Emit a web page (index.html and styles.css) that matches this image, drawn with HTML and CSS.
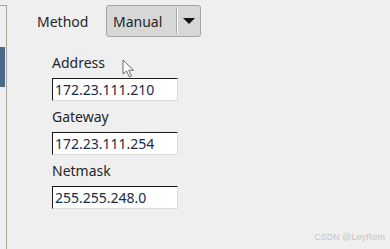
FILE: index.html
```html
<!DOCTYPE html>
<html lang="en">
<head>
  <meta charset="UTF-8" />
  <title>Network settings</title>
  <link rel="stylesheet" href="styles.css">
</head>
<body>
  <div class="side-strip">
    <div class="side-tab"></div>
  </div>

  <div class="panel">
    <div class="method-row">
      <span class="method-label">Method</span>
      <div class="select">
        <span class="select-value">Manual</span>
        <span class="select-sep"></span>
        <span class="select-arrow"></span>
      </div>
    </div>

    <div class="fields">
      <label class="field-label">Address</label>
      <div class="field-input">172.23.111.210</div>
      <label class="field-label">Gateway</label>
      <div class="field-input">172.23.111.254</div>
      <label class="field-label">Netmask</label>
      <div class="field-input">255.255.248.0</div>
    </div>
  </div>

  <svg class="cursor" width="14" height="20" viewBox="0 0 14 20">
    <path d="M1 1 L1 15 L4.5 12 L7.5 18 L9.5 17 L6.8 11.2 L11.5 11.2 Z" fill="#ffffff" stroke="#6a6a6a" stroke-width="1"/>
  </svg>

  <div class="watermark">CSDN @LeyRem</div>
</body>
</html>
```

FILE: styles.css
```css
body {
  margin: 0;
  height: 249px;
  background: #efefef;
  font-family: 'Noto Sans', 'Open Sans', sans-serif;
  color: #232629;
  display: flex;
  overflow: hidden;
}

.side-strip {
  width: 6px;
  margin-top: 5px;
  border-top: 1px solid #aaa59f;
  border-right: 1px solid #aaa59f;
}

.side-tab {
  margin-top: 41px;
  width: 5px;
  height: 40px;
  background: #4b6a86;
}

.panel {
  padding-left: 30px;
  padding-top: 5px;
}

.method-row {
  display: flex;
  align-items: center;
}

.method-label {
  width: 69px;
  font-size: 14px;
}

.select {
  width: 93px;
  height: 30px;
  border: 1px solid #a3a3a3;
  border-radius: 3px;
  background: #d7d7d5;
  display: flex;
  align-items: center;
  box-sizing: content-box;
}

.select-value {
  flex: 1;
  padding-left: 6px;
  font-size: 14px;
}

.select-sep {
  width: 1px;
  height: 26px;
  background: #ffffff;
  border-left: 1px solid #a9a9a9;
}

.select-arrow {
  width: 0;
  height: 0;
  margin: 0 5px 0 5px;
  border-left: 6px solid transparent;
  border-right: 6px solid transparent;
  border-top: 6px solid #111111;
}

.fields {
  margin-left: 15px;
  margin-top: 15px;
  display: flex;
  flex-direction: column;
}

.field-label {
  font-size: 14px;
  line-height: 19px;
  height: 25px;
  padding-top: 1px;
}

.field-input {
  width: 122px;
  height: 21px;
  margin-bottom: 5px;
  background: #ffffff;
  border-top: 1px solid #1b1b1b;
  border-left: 1px solid #1b1b1b;
  border-right: 1px solid #dcdcdc;
  border-bottom: 1px solid #dcdcdc;
  font-size: 14px;
  line-height: 22px;
  padding-left: 2px;
  color: #1d2a44;
}

.cursor {
  position: absolute;
  left: 122px;
  top: 59px;
}

.watermark {
  position: absolute;
  right: 5px;
  bottom: 7px;
  font-family: 'Liberation Sans', sans-serif;
  font-size: 9px;
  color: #c6c6c6;
}
```
